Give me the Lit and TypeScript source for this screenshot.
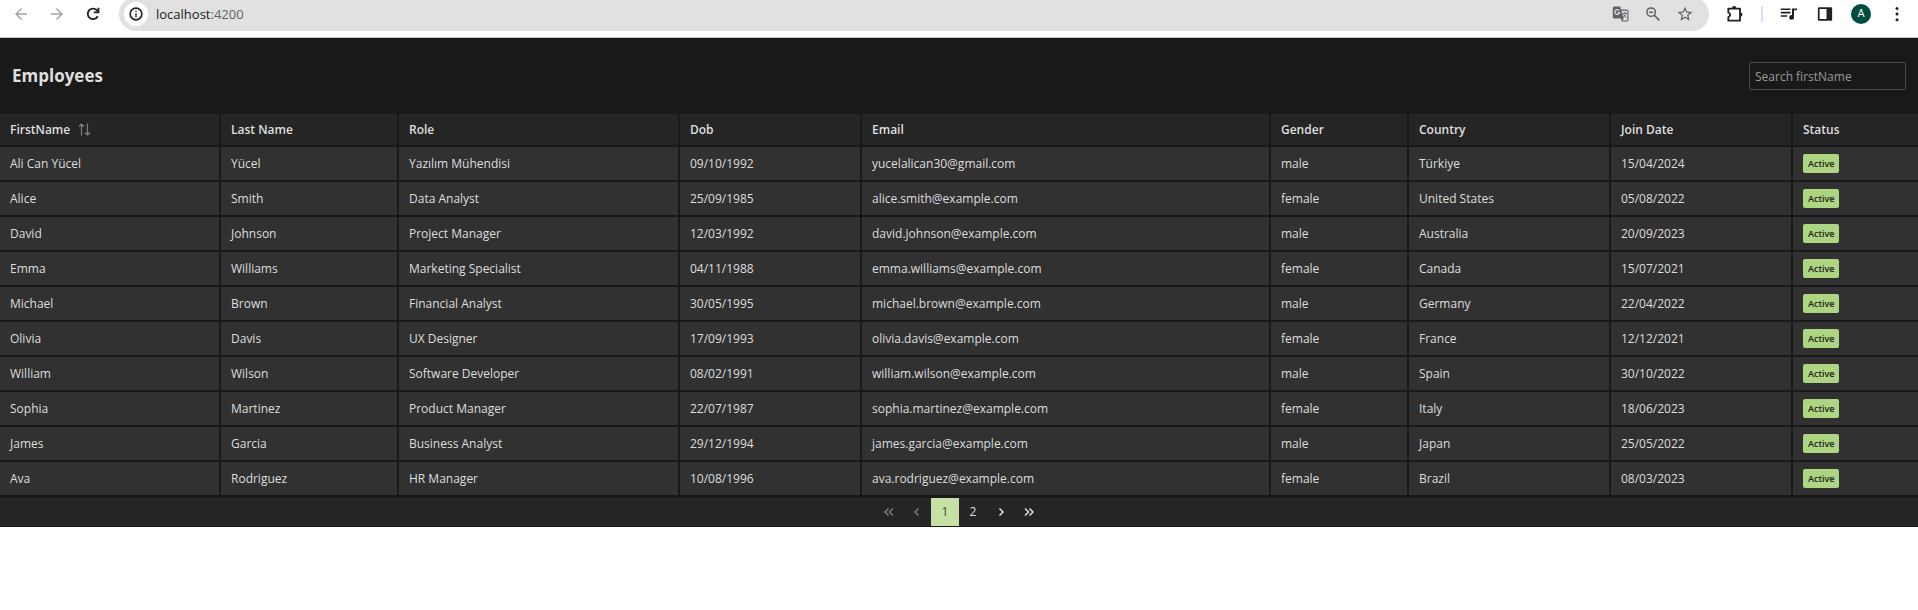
import { LitElement, html, css, svg } from "lit";
import { customElement, state } from "lit/decorators.js";

interface Employee {
  firstName: string;
  lastName: string;
  role: string;
  dob: string;
  email: string;
  gender: string;
  country: string;
  joinDate: string;
}

const rows: string[][] = [
  ["Ali Can Yücel", "Yücel", "Yazılım Mühendisi", "09/10/1992", "yucelalican30@gmail.com", "male", "Türkiye", "15/04/2024"],
  ["Alice", "Smith", "Data Analyst", "25/09/1985", "alice.smith@example.com", "female", "United States", "05/08/2022"],
  ["David", "Johnson", "Project Manager", "12/03/1992", "david.johnson@example.com", "male", "Australia", "20/09/2023"],
  ["Emma", "Williams", "Marketing Specialist", "04/11/1988", "emma.williams@example.com", "female", "Canada", "15/07/2021"],
  ["Michael", "Brown", "Financial Analyst", "30/05/1995", "michael.brown@example.com", "male", "Germany", "22/04/2022"],
  ["Olivia", "Davis", "UX Designer", "17/09/1993", "olivia.davis@example.com", "female", "France", "12/12/2021"],
  ["William", "Wilson", "Software Developer", "08/02/1991", "william.wilson@example.com", "male", "Spain", "30/10/2022"],
  ["Sophia", "Martinez", "Product Manager", "22/07/1987", "sophia.martinez@example.com", "female", "Italy", "18/06/2023"],
  ["James", "Garcia", "Business Analyst", "29/12/1994", "james.garcia@example.com", "male", "Japan", "25/05/2022"],
  ["Ava", "Rodriguez", "HR Manager", "10/08/1996", "ava.rodriguez@example.com", "female", "Brazil", "08/03/2023"],
];

const employees: Employee[] = rows.map(
  ([firstName, lastName, role, dob, email, gender, country, joinDate]) => ({
    firstName, lastName, role, dob, email, gender, country, joinDate,
  })
);

const icon = (body: unknown, size = 20, viewBox = "0 0 24 24") =>
  html`<svg width=${size} height=${size} viewBox=${viewBox} fill="currentColor" aria-hidden="true">${body}</svg>`;

@customElement("browser-bar")
export class BrowserBar extends LitElement {
  static styles = css`
    :host {
      display: flex;
      align-items: flex-end;
      height: 38px;
      box-sizing: border-box;
      padding: 0 3px 6px 11px;
      border-bottom: 1px solid #c8c8c8;
      background: #fff;
      overflow: hidden;
      font-family: "Open Sans", "Noto Sans", sans-serif;
    }
    button {
      display: flex;
      align-items: center;
      justify-content: center;
      flex: none;
      padding: 0;
      border: 0;
      background: none;
      color: #202124;
      width: 36px;
      height: 34px;
    }
    svg {
      display: block;
    }
    .nav {
      width: 20px;
      margin-right: 16px;
    }
    .nav.off {
      color: #a3a3a3;
    }
    .pill {
      display: flex;
      align-items: center;
      flex: 1;
      height: 34px;
      margin-right: 8px;
      padding: 0 8px 0 5px;
      box-sizing: border-box;
      border-radius: 17px;
      background: #e1e1e1;
    }
    .info {
      width: 24px;
      height: 24px;
      border-radius: 12px;
      background: #fff;
      margin-right: 8px;
    }
    .address {
      flex: 1;
      font-size: 13px;
      line-height: 18px;
      color: #5f6368;
    }
    .host {
      color: #202124;
    }
    .pill .tool {
      width: 32px;
      color: #5f6368;
    }
    .divider {
      width: 2px;
      height: 16px;
      margin: 0 8px 9px;
      background: #e8d5ff;
    }
    .avatar {
      width: 20px;
      height: 20px;
      border-radius: 10px;
      background: #004d40;
      color: #fff;
      font-size: 11px;
      line-height: 20px;
      font-family: Roboto, "Open Sans", sans-serif;
    }
  `;

  render() {
    return html`
      <button class="nav off" aria-label="Back">${icon(svg`<path d="M20 11H7.8l5.6-5.6L12 4l-8 8 8 8 1.4-1.4L7.8 13H20z"/>`, 18)}</button>
      <button class="nav off" aria-label="Forward">${icon(svg`<path d="M4 11h12.2l-5.6-5.6L12 4l8 8-8 8-1.4-1.4 5.6-5.6H4z"/>`, 18)}</button>
      <button class="nav" aria-label="Reload">${icon(svg`<path d="M18.300 15A7 7 0 1 1 17.300 7.200L19.500 9.400" fill="none" stroke="currentColor" stroke-width="2.500"/><path d="M20.500 3.500V11H13V8.500H18V3.500z"/>`, 18)}</button>
      <div class="pill">
        <button class="info" aria-label="Site information">${icon(svg`<path d="M11 7h2v2h-2zm0 4h2v6h-2zM12 2a10 10 0 1 0 0 20 10 10 0 0 0 0-20zm0 17.500a7.500 7.500 0 1 1 0-15 7.500 7.500 0 0 1 0 15z"/>`, 16)}</button>
        <span class="address"><span class="host">localhost</span>:4200</span>
        <button class="tool" aria-label="Translate">${icon(svg`
          <path d="M3 2h8l1 4h8a2 2 0 0 1 2 2v12a2 2 0 0 1-2 2h-7l-1-4H3a2 2 0 0 1-2-2V4a2 2 0 0 1 2-2z"/>
          <path d="M12.500 7.500H20.500V20.500H14L15.500 18z" fill="#e1e1e1"/>
          <path d="M9.500 7.300A3.200 3.200 0 1 0 10.200 10H7.500" fill="none" stroke="#e1e1e1" stroke-width="1.600"/>
          <path d="M14 11h6M17 9.500V11M18.700 11c-.5 2.500-2 4-3.700 5.200M15.300 12.500l3.700 4.500" fill="none" stroke="currentColor" stroke-width="1.300"/>`, 18)}</button>
        <button class="tool" aria-label="Zoom">${icon(svg`
          <circle cx="9.500" cy="9.500" r="5.600" fill="none" stroke="currentColor" stroke-width="2"/>
          <path d="M13.800 13.800L20.500 20.500M7 9.500h5" fill="none" stroke="currentColor" stroke-width="2"/>`, 18)}</button>
        <button class="tool" aria-label="Bookmark">${icon(svg`<path d="M22 9.240l-7.190-.62L12 2 9.190 8.630 2 9.240l5.460 4.730L5.820 21 12 17.270 18.180 21l-1.630-7.030zM12 15.400l-3.760 2.270 1-4.280-3.320-2.880 4.380-.38L12 6.100l1.710 4.040 4.380.38-3.320 2.880 1 4.280z"/>`, 18)}</button>
      </div>
      <button aria-label="Extensions">${icon(svg`
        <path d="M4 5.500H18V20H4V15.700C7 14.500 7 11.500 4 10.200z" fill="none" stroke="currentColor" stroke-width="2.200" stroke-linejoin="round"/>
        <path d="M8.500 5a2.500 2.500 0 0 1 5 0zM18.500 10.200a2.500 2.500 0 0 1 0 5z"/>`, 20)}</button>
      <span class="divider"></span>
      <button aria-label="Media">${icon(svg`<path d="M1 4.500h13v2.200H1zM1 9h13v2.200H1zM1 13.500h8.500v2.200H1zM16 4.500h6.500v2.500H18.700V16.500a3.200 3.200 0 1 1-2.700-3.200z"/>`, 18)}</button>
      <button aria-label="Side panel">${icon(svg`<path d="M4 3h16a1.500 1.500 0 0 1 1.500 1.500v15A1.500 1.500 0 0 1 20 21H4a1.500 1.500 0 0 1-1.500-1.500v-15A1.500 1.500 0 0 1 4 3zM4.800 5.200v13.600H14V5.200z" fill-rule="evenodd"/>`, 18)}</button>
      <button aria-label="Profile"><span class="avatar">A</span></button>
      <button aria-label="Menu">${icon(svg`<circle cx="12" cy="4.500" r="2"/><circle cx="12" cy="12" r="2"/><circle cx="12" cy="19.500" r="2"/>`, 18)}</button>
    `;
  }
}

@customElement("employee-table")
export class EmployeeTable extends LitElement {
  static styles = css`
    :host {
      display: block;
      background: #191919;
      color: #dedede;
      font-family: "Open Sans", "Noto Sans", sans-serif;
      font-size: 12px;
      line-height: 18px;
      padding-bottom: 1px;
    }
    .caption {
      display: flex;
      align-items: center;
      justify-content: space-between;
      padding: 24px 12px;
    }
    h1 {
      margin: 0;
      font-size: 17px;
      line-height: 28px;
      font-weight: 700;
    }
    input {
      width: 157px;
      height: 28px;
      box-sizing: border-box;
      padding: 0 5px;
      border: 1px solid #4b4b4b;
      border-radius: 2px;
      background: #191919;
      color: inherit;
      font: inherit;
    }
    input::placeholder {
      color: #9a9a9a;
      opacity: 1;
    }
    table {
      width: 100%;
      table-layout: fixed;
      border-collapse: separate;
      border-spacing: 0;
    }
    th,
    td {
      box-sizing: border-box;
      height: 35px;
      padding: 0 10px;
      border: solid #191919;
      border-width: 0 2px 2px 0;
      text-align: left;
      white-space: nowrap;
      background: #313131;
    }
    th {
      height: 33px;
      font-weight: 600;
      background: #252525;
    }
    th:last-child,
    td:last-child {
      border-right-width: 0;
    }
    .sort {
      display: inline-flex;
      align-items: center;
      gap: 8px;
      padding: 0;
      border: 0;
      background: none;
      color: inherit;
      font: inherit;
    }
    .sort svg {
      color: #828282;
    }
    .tag {
      display: inline-block;
      padding: 0 5px;
      border-radius: 2px;
      background: #aed581;
      color: #1c1c1c;
      font-size: 9px;
      line-height: 19px;
      font-weight: 600;
      vertical-align: middle;
    }
    .pager {
      display: flex;
      justify-content: center;
      border-top: 1px solid #191919;
      background: #252525;
    }
    .pager button {
      display: flex;
      align-items: center;
      justify-content: center;
      width: 28px;
      height: 28px;
      padding: 0;
      border: 0;
      background: none;
      color: #dedede;
      font: inherit;
    }
    .pager button:disabled {
      color: #7a7a7a;
    }
    .pager .current {
      background: #c5e1a5;
      color: #3c4a2c;
    }
  `;

  @state() private columns = [
    { label: "FirstName", width: 221 },
    { label: "Last Name", width: 178 },
    { label: "Role", width: 281 },
    { label: "Dob", width: 182 },
    { label: "Email", width: 409 },
    { label: "Gender", width: 138 },
    { label: "Country", width: 202 },
    { label: "Join Date", width: 182 },
    { label: "Status", width: 125 },
  ];

  private chevrons(d: string) {
    return html`<svg width="12" height="12" viewBox="0 0 12 12" fill="none" stroke="currentColor" stroke-width="1.500" aria-hidden="true"><path d=${d}/></svg>`;
  }

  render() {
    return html`
      <div class="caption">
        <h1>Employees</h1>
        <input type="text" placeholder="Search firstName" aria-label="Search firstName" />
      </div>
      <table>
        <colgroup>
          ${this.columns.map((c) => html`<col style="width:${c.width}px" />`)}
        </colgroup>
        <thead>
          <tr>
            ${this.columns.map((c, i) => i === 0
              ? html`<th scope="col"><button class="sort">${c.label}<svg width="13" height="13" viewBox="0 0 13 13" fill="none" stroke="currentColor" stroke-width="1.200" aria-hidden="true"><path d="M3.500 12.500V1M1 3.500L3.500 1 6 3.500M9.500 .5V12M7 9.500L9.500 12 12 9.500"/></svg></button></th>`
              : html`<th scope="col">${c.label}</th>`)}
          </tr>
        </thead>
        <tbody>
          ${employees.map((e) => html`
            <tr>
              <td>${e.firstName}</td>
              <td>${e.lastName}</td>
              <td>${e.role}</td>
              <td>${e.dob}</td>
              <td>${e.email}</td>
              <td>${e.gender}</td>
              <td>${e.country}</td>
              <td>${e.joinDate}</td>
              <td><span class="tag">Active</span></td>
            </tr>`)}
        </tbody>
      </table>
      <nav class="pager" aria-label="Pages">
        <button disabled aria-label="First page">${this.chevrons("M5.500 2.500L2 6l3.500 3.500M10 2.500L6.500 6 10 9.500")}</button>
        <button disabled aria-label="Previous page">${this.chevrons("M7.500 2.500L4 6l3.500 3.500")}</button>
        <button class="current" aria-current="page">1</button>
        <button>2</button>
        <button aria-label="Next page">${this.chevrons("M4.500 2.500L8 6 4.500 9.500")}</button>
        <button aria-label="Last page">${this.chevrons("M2 2.500L5.500 6 2 9.500M6.500 2.500L10 6 6.500 9.500")}</button>
      </nav>
    `;
  }
}

@customElement("app-root")
export class AppRoot extends LitElement {
  static styles = css`
    :host {
      display: block;
      min-height: 100vh;
      background: #fff;
    }
  `;

  render() {
    return html`<browser-bar></browser-bar><employee-table></employee-table>`;
  }
}
